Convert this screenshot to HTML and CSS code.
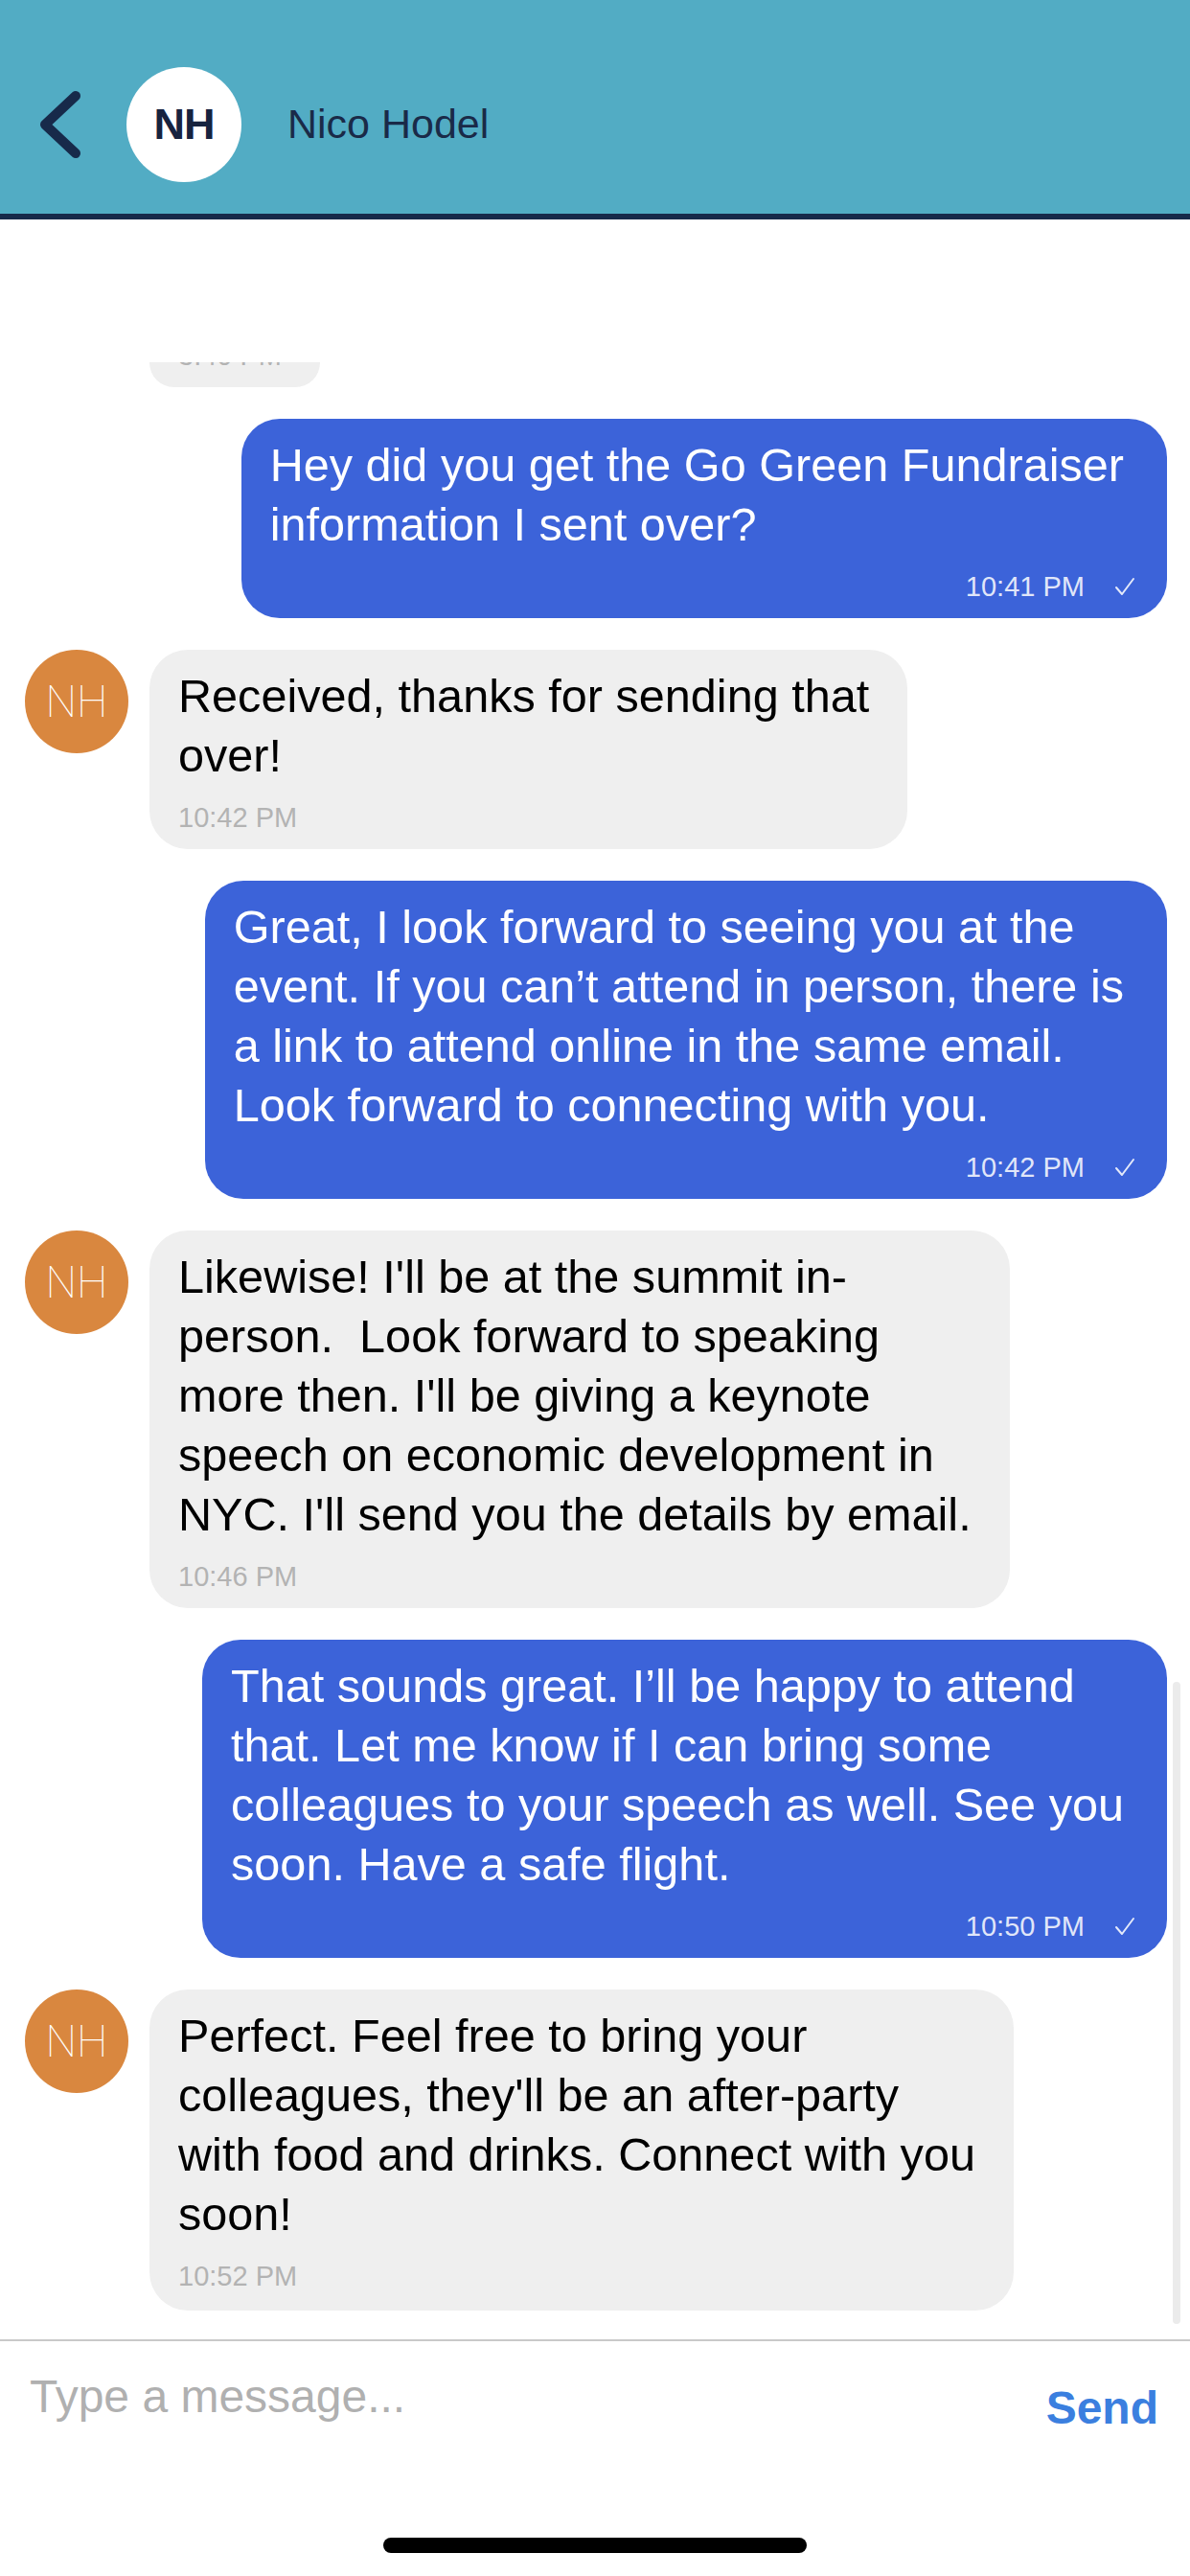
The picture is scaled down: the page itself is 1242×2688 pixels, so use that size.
FILE: index.html
```html
<!DOCTYPE html>
<html lang="en">
<head>
<meta charset="utf-8">
<title>Nico Hodel</title>
<link rel="stylesheet" href="styles.css">
</head>
<body>
<div class="app">
  <header class="header">
    <svg class="back" viewBox="0 0 50 72" width="50" height="72" aria-hidden="true">
      <polyline points="39,6 7,36 39,66" fill="none" stroke="#172a4a" stroke-width="10" stroke-linecap="round" stroke-linejoin="round"/>
    </svg>
    <div class="head-avatar">NH</div>
    <div class="head-name">Nico Hodel</div>
  </header>

  <main class="messages">
    <div class="clip">
      <div class="bubble in partial">
        <div class="meta meta-in">3:40 PM</div>
      </div>
    </div>

    <div class="row out">
      <div class="bubble sent">
        <div class="text">Hey did you get the Go Green Fundraiser<br>information I sent over?</div>
        <div class="meta meta-out"><span>10:41 PM</span><svg class="tick" viewBox="0 0 22 22" width="22" height="22"><polyline points="2,12 8,19 20,3" fill="none" stroke="currentColor" stroke-width="2" stroke-linecap="round" stroke-linejoin="round"/></svg></div>
      </div>
    </div>

    <div class="row in">
      <div class="avatar">NH</div>
      <div class="bubble recv">
        <div class="text">Received, thanks for sending that<br>over!</div>
        <div class="meta meta-in">10:42 PM</div>
      </div>
    </div>

    <div class="row out">
      <div class="bubble sent">
        <div class="text">Great, I look forward to seeing you at the<br>event. If you can’t attend in person, there is<br>a link to attend online in the same email.<br>Look forward to connecting with you.</div>
        <div class="meta meta-out"><span>10:42 PM</span><svg class="tick" viewBox="0 0 22 22" width="22" height="22"><polyline points="2,12 8,19 20,3" fill="none" stroke="currentColor" stroke-width="2" stroke-linecap="round" stroke-linejoin="round"/></svg></div>
      </div>
    </div>

    <div class="row in">
      <div class="avatar">NH</div>
      <div class="bubble recv">
        <div class="text">Likewise! I'll be at the summit in-<br>person.&nbsp; Look forward to speaking<br>more then. I'll be giving a keynote<br>speech on economic development in<br>NYC. I'll send you the details by email.</div>
        <div class="meta meta-in">10:46 PM</div>
      </div>
    </div>

    <div class="row out">
      <div class="bubble sent">
        <div class="text">That sounds great. I’ll be happy to attend<br>that. Let me know if I can bring some<br>colleagues to your speech as well. See you<br>soon. Have a safe flight.</div>
        <div class="meta meta-out"><span>10:50 PM</span><svg class="tick" viewBox="0 0 22 22" width="22" height="22"><polyline points="2,12 8,19 20,3" fill="none" stroke="currentColor" stroke-width="2" stroke-linecap="round" stroke-linejoin="round"/></svg></div>
      </div>
    </div>

    <div class="row in">
      <div class="avatar">NH</div>
      <div class="bubble recv last">
        <div class="text">Perfect. Feel free to bring your<br>colleagues, they'll be an after-party<br>with food and drinks. Connect with you<br>soon!</div>
        <div class="meta meta-in">10:52 PM</div>
      </div>
    </div>

    <div class="scrollbar"></div>
  </main>

  <footer class="composer">
    <div class="placeholder">Type a message...</div>
    <div class="send">Send</div>
  </footer>

  <div class="home">
    <div class="home-bar"></div>
  </div>
</div>
</body>
</html>
```

FILE: styles.css
```css
* { box-sizing: border-box; }

html, body {
  margin: 0;
  padding: 0;
  background: #ffffff;
}

body {
  width: 1242px;
  height: 2688px;
  overflow: hidden;
  font-family: "Liberation Sans", Arial, Helvetica, sans-serif;
  color: #000;
}

.app {
  display: flex;
  flex-direction: column;
  width: 1242px;
  height: 2688px;
}

/* Header */
.header {
  flex: none;
  height: 229px;
  padding: 36px 0 0 40px;
  background: #52acc4;
  border-bottom: 6px solid #172a4a;
  display: flex;
  align-items: center;
}

.back {
  display: block;
  flex: none;
}

.head-avatar {
  flex: none;
  width: 120px;
  height: 120px;
  margin-left: 42px;
  border-radius: 50%;
  background: #ffffff;
  color: #17233f;
  font-weight: 700;
  font-size: 45px;
  letter-spacing: -1px;
  display: flex;
  align-items: center;
  justify-content: center;
}

.head-name {
  margin-left: 48px;
  font-size: 43px;
  color: #1a2a48;
}

/* Messages */
.messages {
  flex: none;
  height: 2212px;
  position: relative;
  overflow: hidden;
  display: flex;
  flex-direction: column;
  gap: 33px;
  padding: 149px 24px 0 26px;
}

.clip {
  height: 26px;
  overflow: hidden;
  display: flex;
  align-items: flex-end;
  padding-left: 130px;
}

.row {
  display: flex;
  align-items: flex-start;
}

.row.out {
  justify-content: flex-end;
}

.row.in {
  gap: 22px;
}

.avatar {
  flex: none;
  width: 108px;
  height: 108px;
  border-radius: 50%;
  background: #d9873f;
  color: #ffffff;
  font-family: "Roboto", "Lato", "Liberation Sans", sans-serif;
  font-weight: 100;
  font-size: 46px;
  display: flex;
  align-items: center;
  justify-content: center;
}

.bubble {
  border-radius: 40px;
  padding: 17px 40px 15px 30px;
}

.bubble.sent {
  background: #3c63d9;
  color: #ffffff;
  padding-right: 45px;
}

.bubble.recv,
.bubble.partial {
  background: #efefef;
  color: #000000;
}

.bubble.last {
  padding-bottom: 18px;
}

.bubble.partial {
  padding-top: 0;
}

.text {
  font-size: 48.6px;
  line-height: 62px;
  white-space: nowrap;
}

.meta {
  margin-top: 16px;
  font-size: 29px;
  line-height: 36px;
  white-space: nowrap;
}

.bubble.partial .meta {
  margin-top: 0;
}

.meta-in {
  color: #b3b3b3;
}

.meta-out {
  display: flex;
  justify-content: flex-end;
  align-items: center;
  gap: 31px;
  margin-right: -12px;
  color: rgba(255, 255, 255, 0.86);
}

.tick {
  display: block;
}

.scrollbar {
  position: absolute;
  right: 10px;
  top: 1526px;
  width: 8px;
  height: 670px;
  border-radius: 4px;
  background: #ebebeb;
}

/* Composer */
.composer {
  flex: none;
  height: 152px;
  border-top: 2px solid #c9c9c9;
  display: flex;
  justify-content: space-between;
  align-items: flex-start;
  padding: 28px 33px 0 31px;
}

.placeholder {
  font-size: 48px;
  line-height: 60px;
  color: #b0b0b0;
}

.send {
  margin-top: 12px;
  font-size: 48px;
  line-height: 60px;
  font-weight: 700;
  color: #3b7fdf;
}

/* Home indicator */
.home {
  flex: 1;
  display: flex;
  justify-content: center;
  padding-top: 55px;
}

.home-bar {
  width: 442px;
  height: 16px;
  border-radius: 8px;
  background: #000000;
}
```
